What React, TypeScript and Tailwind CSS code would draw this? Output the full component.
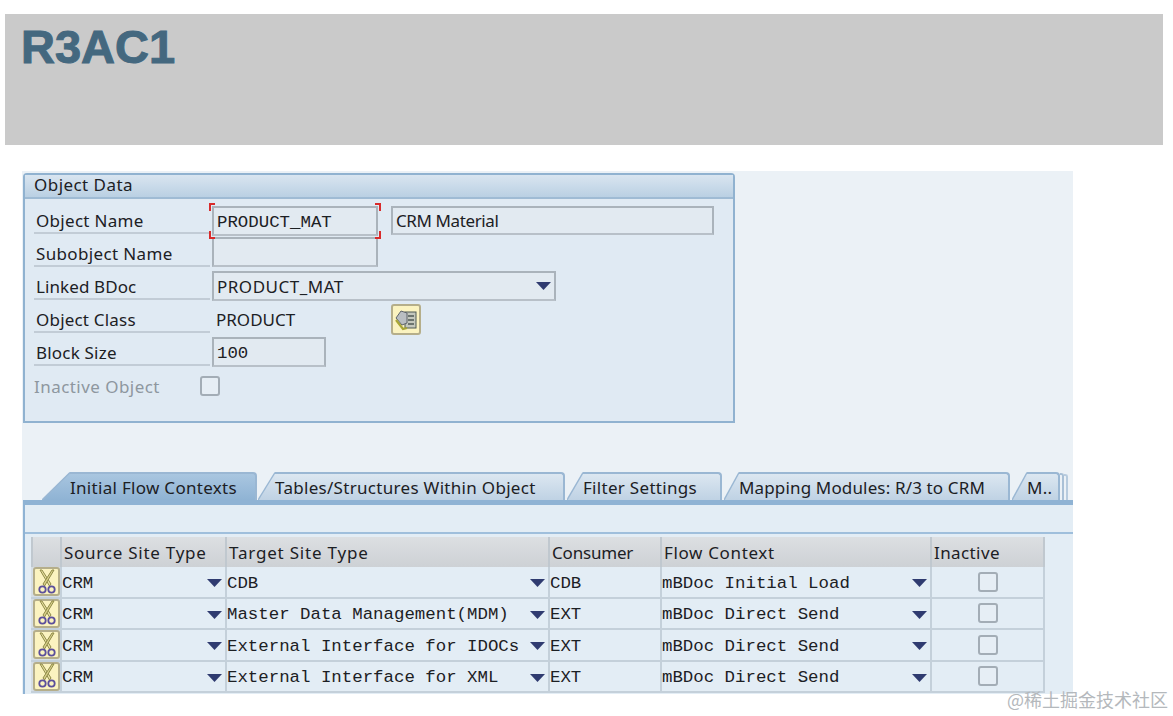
import React from "react";

const sans = "font-['Noto_Sans',sans-serif]";
const mono = "font-['Liberation_Mono',monospace]";

function Scissors() {
  return (
    <svg width="22" height="26" viewBox="0 0 22 26" fill="none">
      <path d="M4 1 L6 1 L15 15 L13.5 17 Z" fill="#e6dfa0" stroke="#8f8a48" strokeWidth="1" />
      <path d="M18 1 L16 1 L7 15 L8.5 17 Z" fill="#d8d08a" stroke="#8f8a48" strokeWidth="1" />
      <circle cx="6.5" cy="20.5" r="3.2" stroke="#5c4f9c" strokeWidth="1.8" />
      <circle cx="15.5" cy="20.5" r="3.2" stroke="#5c4f9c" strokeWidth="1.8" />
    </svg>
  );
}

function ObjectIcon() {
  return (
    <svg width="24" height="24" viewBox="0 0 24 24" fill="none">
      <rect x="11" y="4" width="11" height="16" fill="#c3c7bd" stroke="#4f5a55" strokeWidth="1" />
      <path d="M14 8h6M14 12h6M14 16h6" stroke="#4f5a55" strokeWidth="1.4" />
      <path d="M2 10 L7 3 L13 5 L13 15 L8 17 Z" fill="#b9bec2" stroke="#5f656b" strokeWidth="1" />
      <path d="M2 12 L9 21 L13 20" stroke="#a8a636" strokeWidth="2.2" />
    </svg>
  );
}

function Arrow() {
  return (
    <svg width="15" height="8" viewBox="0 0 15 8" className="shrink-0">
      <path d="M0 0H15L7.5 8Z" fill="#2f3b70" />
    </svg>
  );
}

function Checkbox() {
  return <div className="h-[20px] w-[20px] rounded-[3px] border-2 border-[#a3adb6] bg-[#e6eef5]" />;
}

function Label({ className, children }: { className?: string; children: React.ReactNode }) {
  return (
    <div className={`flex h-[33px] w-[176px] shrink-0 items-center border-b-2 border-[#c2ccd6] pl-[2px] pt-[7px] text-[#1c2024] ${className ?? ""}`}>
      {children}
    </div>
  );
}

function Input({ className, children }: { className: string; children?: React.ReactNode }) {
  return (
    <div
      className={`flex items-center border-2 border-[#aab3bb] border-b-[#b8c0c8] bg-[#e2eaf1] pl-[3px] text-[#1c2024] ${className}`}
    >
      {children}
    </div>
  );
}

function Corners() {
  const base = "absolute h-[8px] w-[6px] border-[#d92b2b]";
  return (
    <>
      <span className={`${base} -left-[3px] -top-[3px] border-l-2 border-t-2`} />
      <span className={`${base} -right-[3px] -top-[3px] border-r-2 border-t-2`} />
      <span className={`${base} -left-[3px] -bottom-[3px] border-b-2 border-l-2`} />
      <span className={`${base} -right-[3px] -bottom-[3px] border-b-2 border-r-2`} />
    </>
  );
}

function Tab({
  label,
  width,
  active,
  slant,
}: {
  label: string;
  width: string;
  active?: boolean;
  slant: number;
}) {
  const top = active ? "#a9c6e0" : "#dce7f1";
  const bottom = active ? "#8fb3d4" : "#bfd2e4";
  const id = active ? "tabA" : "tabB";
  return (
    <div className={`flex h-[28px] shrink-0 ${width}`}>
      <svg width={slant} height="28" viewBox={`0 0 ${slant} 28`} className="shrink-0">
        <defs>
          <linearGradient id={id} x1="0" y1="0" x2="0" y2="1">
            <stop offset="0" stopColor={top} />
            <stop offset="1" stopColor={bottom} />
          </linearGradient>
        </defs>
        <path d={`M0 28 L${slant} 0 V28 Z`} fill={`url(#${id})`} />
        <path d={`M0 28 L${slant} 0.5`} stroke="#9ab7d3" strokeWidth="1.4" />
      </svg>
      <div
        className={`flex min-w-0 flex-1 items-center rounded-tr-[4px] border-r-2 border-t-2 border-[#9ab7d3] pb-[1px] pt-[1px] text-[#1c2024] ${
          active
            ? "bg-gradient-to-b from-[#a9c6e0] to-[#8fb3d4]"
            : "bg-gradient-to-b from-[#dce7f1] to-[#bfd2e4]"
        }`}
      >
        {label}
      </div>
    </div>
  );
}

const COLS = "grid-cols-[29px_165px_323px_112px_270px_115px]";

const rows = [
  ["CRM", "CDB", "CDB", "mBDoc Initial Load"],
  ["CRM", "Master Data Management(MDM)", "EXT", "mBDoc Direct Send"],
  ["CRM", "External Interface for IDOCs", "EXT", "mBDoc Direct Send"],
  ["CRM", "External Interface for XML", "EXT", "mBDoc Direct Send"],
];

function HeadCell({ className, children }: { className?: string; children?: React.ReactNode }) {
  return (
    <div
      className={`flex items-center border-l-2 border-[#c0c8cf] bg-gradient-to-b from-[#dcdfe2] to-[#cdd1d5] pl-[2px] pt-[1px] text-[#1c2024] ${className ?? ""}`}
    >
      {children}
    </div>
  );
}

function Cell({ text, arrow }: { text: string; arrow?: boolean }) {
  return (
    <div
      className={`flex items-center justify-between overflow-hidden whitespace-nowrap border-b-2 border-l-2 border-[#c4d0da] pr-[3px] pt-[3px] text-[#1c2024] ${mono} text-[17.4px]`}
    >
      <span>{text}</span>
      {arrow && <Arrow />}
    </div>
  );
}

export default function App() {
  return (
    <div className={`relative h-[716px] w-[1173px] overflow-hidden bg-white ${sans} text-[17px] leading-none`}>
      <div className="pl-[5px] pt-[14px]">
        <div className="h-[131px] w-[1158px] bg-[#cacaca] pl-[16px] pt-[10px]">
          <div className="font-['Liberation_Sans',sans-serif] text-[47px] font-bold leading-[46px] text-[#44687f] [-webkit-text-stroke:1px_#44687f]">
            R3AC1
          </div>
        </div>
      </div>

      <div className="ml-[22px] mt-[26px] h-[523px] w-[1051px] bg-[#ebf1f6] pl-[1px] pt-[2px]">
        <div className="h-[250px] w-[712px] rounded-t-[4px] border-2 border-[#90b2d0] bg-[#e0eaf3]">
          <div className="flex h-[24px] items-center border-b-2 border-[#9fbbd4] bg-gradient-to-b from-[#d9e5f0] to-[#bad0e3] pb-[3px] pl-[9px] tracking-[0.45px] text-[#1c2024]">
            Object Data
          </div>
          <div className="pl-[9px] pt-[2px]">
            <div className="flex h-[33px]">
              <Label className="tracking-[0.3px]">Object Name</Label>
              <div className="relative ml-[2px] mt-[5px] h-[30px]">
                <Input className={`h-[30px] w-[166px] pt-[3px] ${mono} text-[17.4px]`}>PRODUCT_MAT</Input>
                <Corners />
              </div>
              <Input className="ml-[13px] mt-[5px] h-[29px] w-[323px] tracking-[-0.4px]">CRM Material</Input>
            </div>
            <div className="flex h-[33px]">
              <Label className="tracking-[0.35px]">Subobject Name</Label>
              <Input className="ml-[2px] mt-[3px] h-[30px] w-[166px]" />
            </div>
            <div className="flex h-[33px]">
              <Label className="tracking-[0.1px]">Linked BDoc</Label>
              <Input className="ml-[2px] mt-[4px] h-[30px] w-[344px] justify-between pr-[3px] tracking-[0.5px]">
                PRODUCT_MAT
                <Arrow />
              </Input>
            </div>
            <div className="flex h-[33px]">
              <Label className="tracking-[0.2px]">Object Class</Label>
              <div className="flex w-[181px] items-center pl-[6px] pt-[6px] text-[#1c2024]">PRODUCT</div>
              <div className="mt-[4px] flex h-[31px] w-[30px] items-center justify-center rounded-[3px] border-2 border-[#b5ae8a] bg-[#fbf3c0]">
                <ObjectIcon />
              </div>
            </div>
            <div className="flex h-[33px]">
              <Label className="tracking-[0.2px]">Block Size</Label>
              <Input className={`ml-[2px] mt-[4px] h-[30px] w-[114px] pt-[3px] ${mono} text-[17.4px]`}>100</Input>
            </div>
            <div className="mt-[10px] flex items-center text-[#8e979f]">
              <div className="w-[166px] tracking-[0.45px]">Inactive Object</div>
              <Checkbox />
            </div>
          </div>
        </div>

        <div className="mt-[49px] flex pl-[19px] tracking-[0.3px]">
          <Tab label="Initial Flow Contexts" width="w-[215px] mr-[1px]" slant={28} active />
          <Tab label="Tables/Structures Within Object" width="w-[307px] mr-[2px]" slant={17} />
          <Tab label="Filter Settings" width="w-[155px] mr-[2px]" slant={16} />
          <Tab label="Mapping Modules: R/3 to CRM" width="w-[286px] mr-[2px] tracking-[0.15px]" slant={15} />
          <Tab label="M.." width="w-[48px]" slant={15} />
          <div className="mt-[1px] h-[27px] w-[4px] rounded-tr-[3px] border-r-2 border-t-2 border-[#a9c0d6]" />
          <div className="mt-[2px] h-[26px] w-[4px] rounded-tr-[3px] border-r-2 border-t-2 border-[#b7cbde]" />
        </div>

        <div className="h-[194px] w-[1050px] overflow-hidden border-l-2 border-t-[5px] border-[#8fb3d4] bg-[#e3edf5] pt-[27px]">
          <div className="border-t-2 border-[#9fbfdc] pl-[6px] pt-[3px]">
            <div className={`grid ${COLS} h-[30px]`}>
              <HeadCell />
              <HeadCell className="tracking-[0.75px]">Source Site Type</HeadCell>
              <HeadCell className="tracking-[0.8px]">Target Site Type</HeadCell>
              <HeadCell className="tracking-[-0.2px]">Consumer</HeadCell>
              <HeadCell className="tracking-[0.65px]">Flow Context</HeadCell>
              <HeadCell className="border-r-2 tracking-[0.4px]">Inactive</HeadCell>
            </div>
            {rows.map((r, i) => (
              <div key={i} className={`grid ${COLS} h-[31.5px]`}>
                <div className="flex items-center justify-end border-b-2 border-[#c4d0da] bg-[#d6dee5]">
                  <div className="flex h-[29px] w-[27px] items-center justify-center rounded-[3px] border-2 border-[#b5ae8a] bg-[#fbf3c0]">
                    <Scissors />
                  </div>
                </div>
                <Cell text={r[0]} arrow />
                <Cell text={r[1]} arrow />
                <Cell text={r[2]} />
                <Cell text={r[3]} arrow />
                <div className="flex items-center justify-center border-x-2 border-b-2 border-[#c4d0da]">
                  <Checkbox />
                </div>
              </div>
            ))}
          </div>
        </div>
      </div>

      <div className="absolute left-[1007px] top-[689px] whitespace-nowrap font-['Noto_Sans_CJK_SC',serif] text-[18px] leading-[20px] text-[#b4b8bc]">
        @稀土掘金技术社区
      </div>
    </div>
  );
}
